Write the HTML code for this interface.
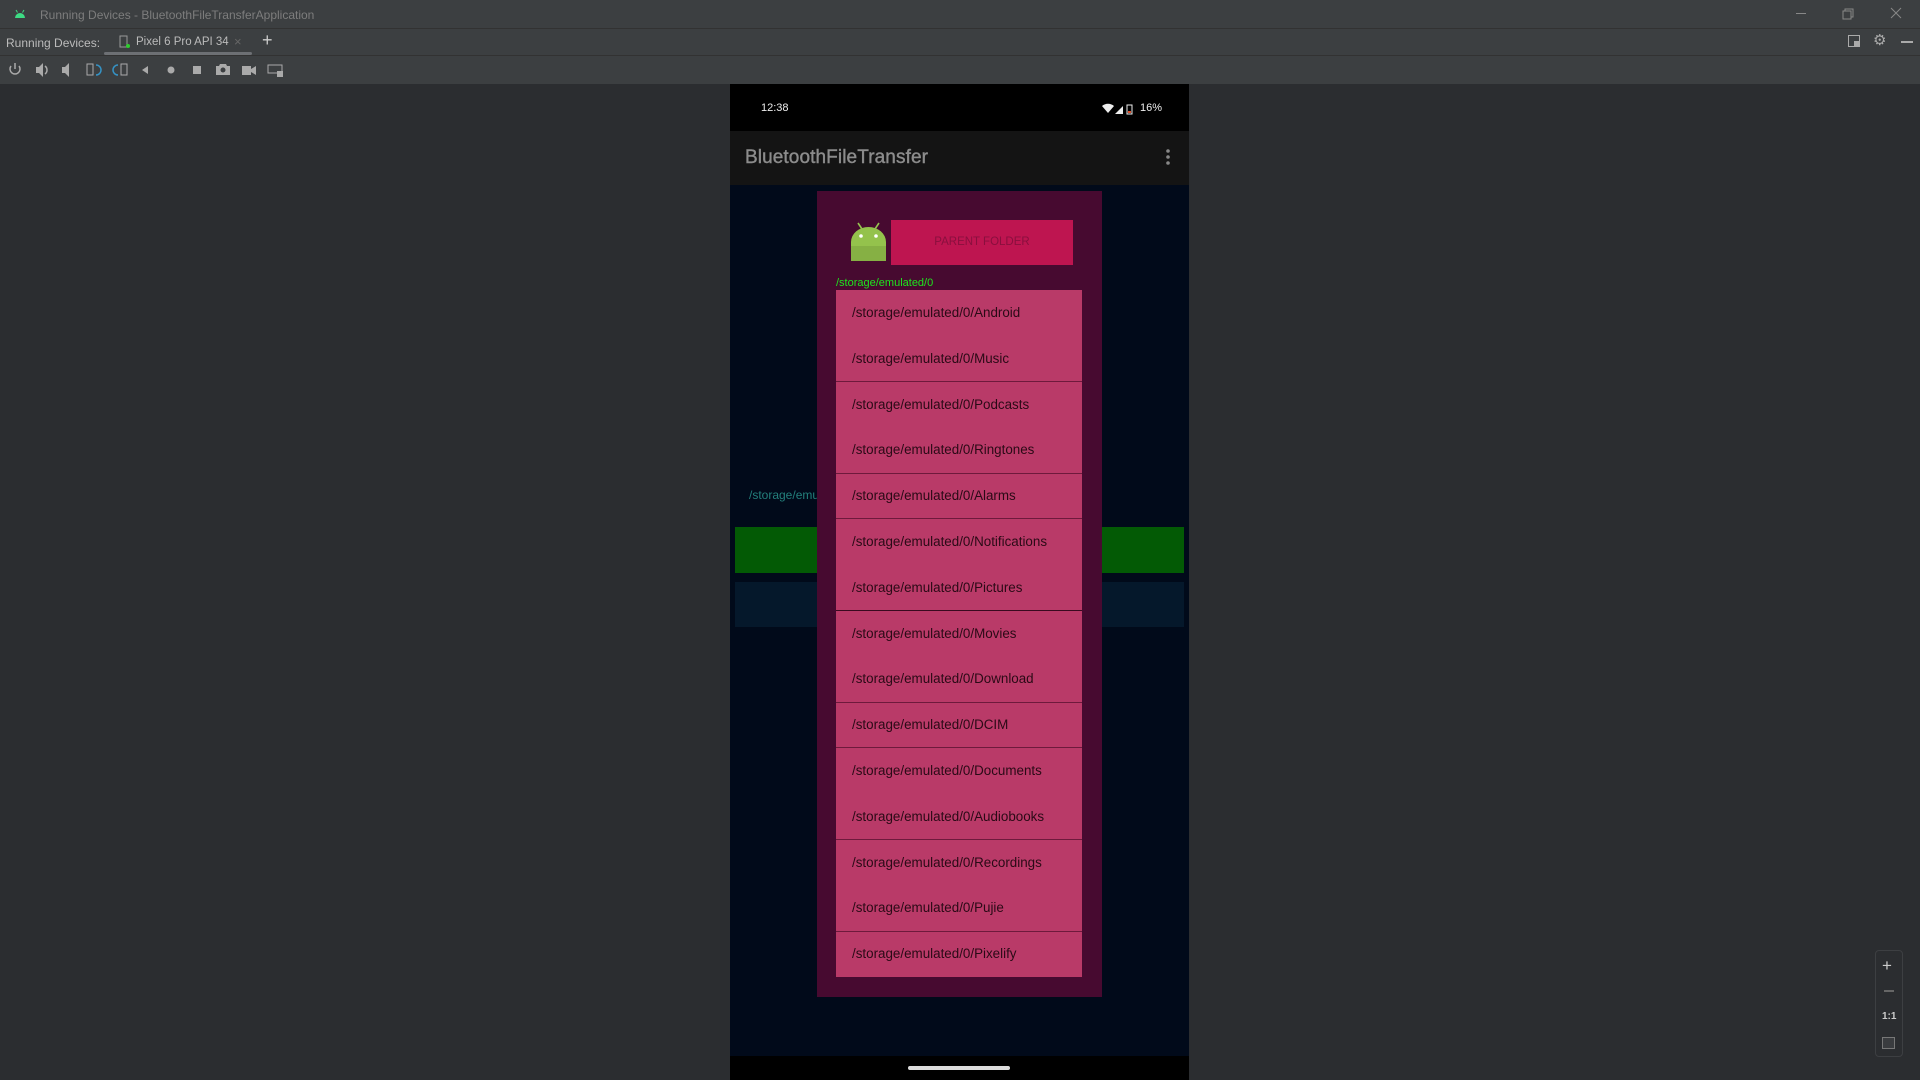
<!DOCTYPE html>
<html><head><meta charset="utf-8"><style>
*{margin:0;padding:0;box-sizing:border-box}
body{width:1920px;height:1080px;background:#2b2d30;font-family:"Liberation Sans",sans-serif;position:relative;overflow:hidden}
.abs{position:absolute}
.t{color:#bbb;font-size:12px;white-space:nowrap}
.item{position:absolute;left:0;width:246px;height:45.8px;color:#2a0a16;font-size:13.4px;padding-left:16px;line-height:45.8px;white-space:nowrap;font-family:"Liberation Sans",sans-serif}
.div{position:absolute;left:0;width:246px;height:1px;background:#6e1a3c}
</style></head><body>
<div class="abs" style="left:0;top:0;width:1920px;height:28px;background:#3c3f41"></div>
<svg class="abs" style="left:14px;top:9px" width="12" height="9" viewBox="0 0 12 9"><path d="M1 9 A5 5 0 0 1 11 9Z" fill="#3ddc84"/><path d="M2 1 L3.5 3.5 M10 1 L8.5 3.5" stroke="#3ddc84"/></svg>
<div class="abs" style="left:40px;top:8px;color:#7d7d7d;font-size:12px">Running Devices - BluetoothFileTransferApplication</div>
<div class="abs" style="left:1796px;top:13px;width:10px;height:1px;background:#888"></div>
<svg class="abs" style="left:1842px;top:8px" width="12" height="12"><rect x="1" y="3" width="8" height="8" fill="none" stroke="#888"/><path d="M3 3V1h8v8h-2" fill="none" stroke="#888"/></svg>
<svg class="abs" style="left:1890px;top:7px" width="12" height="12"><path d="M1 1L11 11M11 1L1 11" stroke="#888"/></svg>
<div class="abs" style="left:0;top:28px;width:1920px;height:27px;background:#3c3f41;border-top:1px solid #323232"></div>
<div class="abs t" style="left:6px;top:36px">Running Devices:</div>
<svg class="abs" style="left:119px;top:35px" width="12" height="14"><rect x="1" y="1" width="7" height="11" fill="none" stroke="#999"/><circle cx="9" cy="11" r="2" fill="#2ecc2e"/></svg>
<div class="abs t" style="left:136px;top:36px;font-size:11.5px">Pixel 6 Pro API 34</div>
<div class="abs" style="left:234px;top:34px;color:#666;font-size:13px">×</div>
<div class="abs" style="left:262px;top:30px;color:#ccc;font-size:18px">+</div>
<div class="abs" style="left:104px;top:52px;width:148px;height:3px;background:#6d7074;border-radius:2px"></div>
<svg class="abs" style="left:1848px;top:35px" width="12" height="12"><rect x="0.5" y="0.5" width="11" height="11" fill="none" stroke="#aaa"/><rect x="6" y="6" width="5" height="5" fill="#aaa"/></svg>
<div class="abs" style="left:1873px;top:31px;color:#aaa;font-size:15px">⚙</div>
<div class="abs" style="left:1901px;top:41px;width:12px;height:2px;background:#aaa"></div>
<div class="abs" style="left:0;top:55px;width:1920px;height:29px;background:#3c3f41;border-top:1px solid #323232"></div>
<svg class="abs" style="left:0;top:60px" width="290" height="20">
<g fill="none" stroke="#aaa" stroke-width="1.5"><path d="M11 6 A5 5 0 1 0 19 6"/><path d="M15 3v6"/></g>
<path d="M36 7h3l4-4v14l-4-4h-3z" fill="#aaa"/><path d="M45 6a5 5 0 0 1 0 8" stroke="#aaa" fill="none" stroke-width="1.5"/>
<path d="M62 7h3l4-4v14l-4-4h-3z" fill="#aaa"/>
<rect x="87" y="4" width="6" height="11" fill="none" stroke="#aaa"/><path d="M96 5a5 5 0 0 1 0 10" stroke="#3592c4" fill="none" stroke-width="1.5"/>
<path d="M118 5a5 5 0 0 0 0 10" stroke="#3592c4" fill="none" stroke-width="1.5"/><rect x="121" y="4" width="6" height="11" fill="none" stroke="#aaa"/>
<path d="M148 6v8l-6-4z" fill="#aaa"/>
<circle cx="171" cy="10" r="3.5" fill="#aaa"/>
<rect x="193" y="6" width="8" height="8" fill="#aaa"/>
<path d="M216 6h3l1-2h6l1 2h3v9h-14z" fill="#aaa"/><circle cx="223" cy="10" r="2.5" fill="#3c3f41"/>
<path d="M242 6h9v9h-9zM251 9l5-3v9l-5-3z" fill="#aaa"/>
<rect x="268" y="5" width="14" height="8" fill="none" stroke="#aaa"/><rect x="277" y="11" width="6" height="6" fill="#aaa"/>
</svg>
<div class="abs" style="left:730px;top:84px;width:459px;height:996px;background:#010a1a"></div>
<div class="abs" style="left:730px;top:84px;width:459px;height:47px;background:#000"></div>
<div class="abs" style="left:761px;top:102px;color:#eee;font-size:11px">12:38</div>
<svg class="abs" style="left:1102px;top:103px" width="40" height="12"><path d="M0 3 A9 9 0 0 1 12 3 L6 10Z" fill="#eee"/><path d="M13 11L21 3V11Z" fill="#eee"/><rect x="25" y="2" width="5" height="9" fill="none" stroke="#eee"/><rect x="26" y="8" width="3" height="2" fill="#e0502a"/></svg>
<div class="abs" style="left:1140px;top:102px;color:#eee;font-size:11px">16%</div>
<div class="abs" style="left:730px;top:131px;width:459px;height:54px;background:#141414"></div>
<div class="abs" style="left:745px;top:147px;color:#8c8c8c;font-size:19px;font-family:'Liberation Sans',sans-serif;letter-spacing:0.1px;-webkit-text-stroke:0.4px #8c8c8c">BluetoothFileTransfer</div>
<svg class="abs" style="left:1165px;top:148px" width="6" height="18"><circle cx="3" cy="3" r="1.8" fill="#888"/><circle cx="3" cy="9" r="1.8" fill="#888"/><circle cx="3" cy="15" r="1.8" fill="#888"/></svg>
<div class="abs" style="left:749px;top:488px;color:#23807c;font-size:12px">/storage/emu</div>
<div class="abs" style="left:735px;top:527px;width:449px;height:46px;background:#035a05"></div>
<div class="abs" style="left:735px;top:582px;width:449px;height:45px;background:#05182b"></div>
<div class="abs" style="left:817px;top:191px;width:285px;height:806px;background:#470a30"></div>
<svg class="abs" style="left:850px;top:222px" width="37" height="40" viewBox="0 0 37 40"><path d="M8 1l4 6M29 1l-4 6" stroke="#96c450" stroke-width="1.6"/><path d="M1 20 A17.5 15 0 0 1 36 20 V39 H1Z" fill="#94c24c"/><path d="M1 24h35v15H1z" fill="#86b044"/><circle cx="11" cy="14" r="1.8" fill="#fff"/><circle cx="26" cy="14" r="1.8" fill="#fff"/></svg>
<div class="abs" style="left:891px;top:220px;width:182px;height:45px;background:#be1550;color:#8a0f3e;font-size:11.5px;text-align:center;line-height:45px">PARENT FOLDER</div>
<div class="abs" style="left:836px;top:277px;color:#1ee61e;font-size:11px">/storage/emulated/0</div>
<div class="abs" style="left:836px;top:290px;width:246px;height:687px;background:#b93a68;overflow:hidden">
<div class="item" style="top:0">/storage/emulated/0/Android</div>
<div class="item" style="top:45.8px">/storage/emulated/0/Music</div>
<div class="item" style="top:91.6px">/storage/emulated/0/Podcasts</div>
<div class="item" style="top:137.4px">/storage/emulated/0/Ringtones</div>
<div class="item" style="top:183.2px">/storage/emulated/0/Alarms</div>
<div class="item" style="top:229px">/storage/emulated/0/Notifications</div>
<div class="item" style="top:274.8px">/storage/emulated/0/Pictures</div>
<div class="item" style="top:320.6px">/storage/emulated/0/Movies</div>
<div class="item" style="top:366.4px">/storage/emulated/0/Download</div>
<div class="item" style="top:412.2px">/storage/emulated/0/DCIM</div>
<div class="item" style="top:458px">/storage/emulated/0/Documents</div>
<div class="item" style="top:503.8px">/storage/emulated/0/Audiobooks</div>
<div class="item" style="top:549.6px">/storage/emulated/0/Recordings</div>
<div class="item" style="top:595.4px">/storage/emulated/0/Pujie</div>
<div class="item" style="top:641.2px">/storage/emulated/0/Pixelify</div>
<div class="div" style="top:91px"></div><div class="div" style="top:183px"></div><div class="div" style="top:228px"></div>
<div class="div" style="top:320px;background:#3a0a20"></div><div class="div" style="top:412px"></div><div class="div" style="top:457px"></div>
<div class="div" style="top:549px"></div><div class="div" style="top:641px"></div>
</div>
<div class="abs" style="left:730px;top:1056px;width:459px;height:24px;background:#000"></div>
<div class="abs" style="left:908px;top:1066px;width:102px;height:4px;background:#ddd;border-radius:2px"></div>
<div class="abs" style="left:1875px;top:950px;width:28px;height:107px;border:1px solid #3d3f42;border-radius:4px;background:#2b2d30"></div>
<div class="abs" style="left:1882px;top:956px;color:#ccc;font-size:17px">+</div>
<div class="abs" style="left:1884px;top:990px;width:10px;height:2px;background:#666"></div>
<div class="abs" style="left:1882px;top:1011px;color:#ccc;font-size:10px;font-weight:bold">1:1</div>
<div class="abs" style="left:1882px;top:1037px;width:13px;height:12px;border:1px solid #777;background:#3a3c3f"></div>
</body></html>
